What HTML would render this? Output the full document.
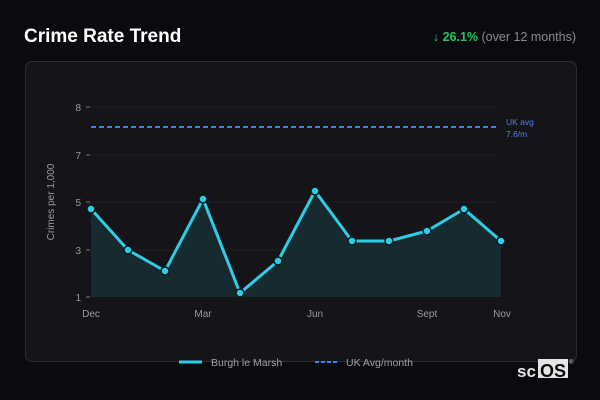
<!DOCTYPE html>
<html><head><style>
body{margin:0;width:600px;height:400px;background:#0b0b0f;overflow:hidden;font-family:"Liberation Sans",sans-serif;position:relative}
.t{position:absolute;left:24px;top:26px;color:#fff;font-weight:bold;font-size:19px}
.r{position:absolute;right:24px;top:30px;font-size:12.5px;color:#8a8a8f}
.r b{color:#22c55e}
.card{position:absolute;left:25px;top:61px;width:550px;height:299px;border:1px solid #2c2c31;border-radius:7px;background:#151519}
svg{position:absolute;left:0;top:0}
</style></head><body>
<div class="t">Crime Rate Trend</div>
<div class="r"><span style="color:#22c55e">↓</span> <b>26.1%</b> (over 12 months)</div>
<div class="card"></div>
<svg width="600" height="400" font-family="Liberation Sans, sans-serif">
<g stroke="#26262b" stroke-dasharray="2,2" stroke-width="1">
<line x1="91" y1="107" x2="500" y2="107"/><line x1="91" y1="155" x2="500" y2="155"/><line x1="91" y1="202" x2="500" y2="202"/><line x1="91" y1="250" x2="500" y2="250"/>
</g>
<g stroke="#777" stroke-width="1"><line x1="86" y1="107" x2="90" y2="107"/><line x1="86" y1="155" x2="90" y2="155"/><line x1="86" y1="202" x2="90" y2="202"/><line x1="86" y1="250" x2="90" y2="250"/><line x1="86" y1="297" x2="90" y2="297"/></g>
<g fill="#9a9a9f" font-size="10" text-anchor="end"><text x="81" y="111">8</text><text x="81" y="159">7</text><text x="81" y="206">5</text><text x="81" y="254">3</text><text x="81" y="301">1</text></g>
<text x="54" y="202" fill="#9a9a9f" font-size="10" text-anchor="middle" transform="rotate(-90 54 202)">Crimes per 1,000</text>
<polygon fill="#172a30" points="91,209 128,250 165,271 203,199 240,293 278,261 315,191 352,241 389,241 427,231 464,209 501,241 501,297 91,297"/>
<line x1="91" y1="127" x2="498" y2="127" stroke="#3b82f6" stroke-width="2" stroke-dasharray="5,3"/>
<text x="506" y="125" fill="#4f7fe0" font-size="8.5">UK avg</text><text x="506" y="137" fill="#4f7fe0" font-size="8.5">7.6/m</text>
<polyline fill="none" stroke="#2dcde6" stroke-width="3" stroke-linejoin="round" points="91,209 128,250 165,271 203,199 240,293 278,261 315,191 352,241 389,241 427,231 464,209 501,241"/>
<g fill="#2dcde6" stroke="#0d1a1e" stroke-width="1.5">
<circle cx="91" cy="209" r="4"/><circle cx="128" cy="250" r="4"/><circle cx="165" cy="271" r="4"/><circle cx="203" cy="199" r="4"/><circle cx="240" cy="293" r="4"/><circle cx="278" cy="261" r="4"/><circle cx="315" cy="191" r="4"/><circle cx="352" cy="241" r="4"/><circle cx="389" cy="241" r="4"/><circle cx="427" cy="231" r="4"/><circle cx="464" cy="209" r="4"/><circle cx="501" cy="241" r="4"/>
</g>
<g fill="#9a9a9f" font-size="10" text-anchor="middle"><text x="91" y="317">Dec</text><text x="203" y="317">Mar</text><text x="315" y="317">Jun</text><text x="427" y="317">Sept</text><text x="502" y="317">Nov</text></g>
<line x1="179" y1="362" x2="202" y2="362" stroke="#2dcde6" stroke-width="3"/>
<text x="211" y="366" fill="#a0a0a5" font-size="10.5">Burgh le Marsh</text>
<line x1="315" y1="362" x2="338" y2="362" stroke="#3b82f6" stroke-width="2" stroke-dasharray="4,2"/>
<text x="346" y="366" fill="#a0a0a5" font-size="10.5">UK Avg/month</text>
<text x="517" y="377" fill="#e5e5e5" font-size="17" font-weight="bold">sc</text>
<rect x="538" y="359" width="30" height="19" fill="#e5e5e5"/>
<text x="540" y="377" fill="#0b0b0f" font-size="18" font-weight="bold">OS</text>
<text x="569" y="364" fill="#ccc" font-size="6">®</text>
</svg>
</body></html>
